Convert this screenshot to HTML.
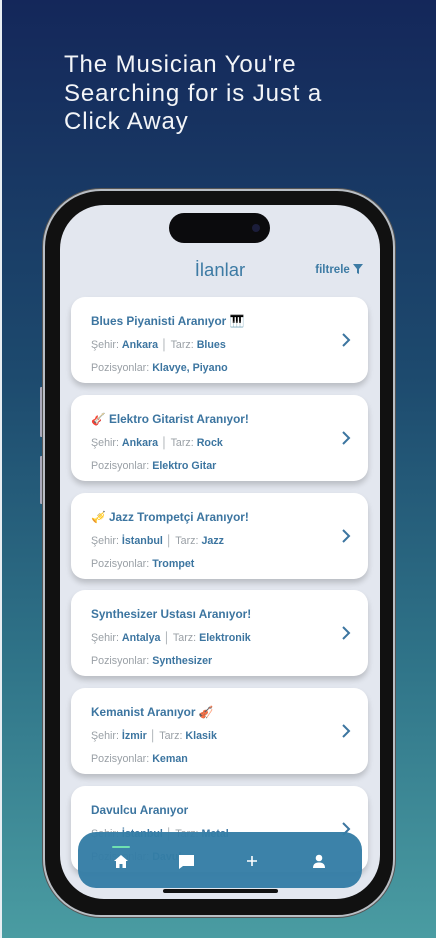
<!DOCTYPE html>
<html><head><meta charset="utf-8"><style>
*{margin:0;padding:0;box-sizing:border-box}
body{width:436px;height:938px;overflow:hidden;font-family:"Liberation Sans","DejaVu Sans",sans-serif;background:linear-gradient(180deg,#14275a 0%,#1d4a6e 40%,#2f7388 70%,#4a9ca2 100%);position:relative}
.edge{position:absolute;left:0;top:0;width:2px;height:938px;background:#e8eef3}
h1{position:absolute;left:64px;top:51px;color:#f3f5f8;font-weight:400;font-size:24px;line-height:28.5px;letter-spacing:0.9px}
.phone{position:absolute;left:43px;top:189px;width:352px;height:728px;border-radius:58px;background:#111;border:2px solid #b9bec4;box-shadow:0 0 0 1px #555}
.btn{position:absolute;left:40px;width:3px;background:#aab;border-radius:1px}
.screen{position:absolute;left:60px;top:205px;width:320px;height:694px;border-radius:44px;background:#e3e7ef;overflow:hidden}
.island{position:absolute;left:109px;top:8px;width:101px;height:30px;border-radius:16px;background:#0b0b0d}
.cam{position:absolute;left:83px;top:11px;width:8px;height:8px;border-radius:50%;background:#1b1d3a}
.title{position:absolute;left:0;width:100%;top:54px;text-align:center;color:#3d7ba4;font-size:18.5px}
.filt{position:absolute;right:17px;top:59px;color:#3d7ba4;font-size:11.5px;font-weight:bold}
.card{position:absolute;left:11px;width:297px;height:86px;background:#fff;border-radius:14px;box-shadow:0 4px 6px rgba(0,0,0,.18)}
.card .t{position:absolute;left:20px;top:17px;font-size:11.8px;font-weight:bold;color:#3c75a0}
.card .l{position:absolute;left:20px;font-size:10.7px;color:#9aa0a6}
.card .l b{color:#3c75a0}
.card .l1{top:42px}.card .l2{top:65px}
.chev{position:absolute;right:17px;top:35px}
.nav{position:absolute;left:18px;top:627px;width:284px;height:56px;border-radius:18px;background:rgba(52,125,165,.96)}
.bar{position:absolute;left:103px;top:684px;width:115px;height:4px;border-radius:2px;background:#111}
</style></head><body>
<div class="edge"></div>
<h1>The Musician You're<br>Searching for is Just a<br>Click Away</h1>
<div class="btn" style="top:387px;height:50px"></div>
<div class="btn" style="top:456px;height:48px"></div>
<div class="phone"></div>
<div class="screen">
<div class="island"><div class="cam"></div></div>
<div class="title">İlanlar</div>
<div class="filt">filtrele <svg width="10" height="10" viewBox="0 0 10 10" style="vertical-align:-1px"><path d="M0 0H10L6 5V10L4 9V5Z" fill="#3d7ba4"/></svg></div>

<div class="card" style="top:92px"><div class="t">Blues Piyanisti Aranıyor 🎹</div><div class="l l1">Şehir: <b>Ankara</b> │ Tarz: <b>Blues</b></div><div class="l l2">Pozisyonlar: <b>Klavye, Piyano</b></div><svg class="chev" width="10" height="16" viewBox="0 0 10 16"><path d="M2 2L8 8L2 14" stroke="#3c75a0" stroke-width="2" fill="none"/></svg></div>
<div class="card" style="top:190px"><div class="t">🎸 Elektro Gitarist Aranıyor!</div><div class="l l1">Şehir: <b>Ankara</b> │ Tarz: <b>Rock</b></div><div class="l l2">Pozisyonlar: <b>Elektro Gitar</b></div><svg class="chev" width="10" height="16" viewBox="0 0 10 16"><path d="M2 2L8 8L2 14" stroke="#3c75a0" stroke-width="2" fill="none"/></svg></div>
<div class="card" style="top:288px"><div class="t">🎺 Jazz Trompetçi Aranıyor!</div><div class="l l1">Şehir: <b>İstanbul</b> │ Tarz: <b>Jazz</b></div><div class="l l2">Pozisyonlar: <b>Trompet</b></div><svg class="chev" width="10" height="16" viewBox="0 0 10 16"><path d="M2 2L8 8L2 14" stroke="#3c75a0" stroke-width="2" fill="none"/></svg></div>
<div class="card" style="top:385px"><div class="t">Synthesizer Ustası Aranıyor!</div><div class="l l1">Şehir: <b>Antalya</b> │ Tarz: <b>Elektronik</b></div><div class="l l2">Pozisyonlar: <b>Synthesizer</b></div><svg class="chev" width="10" height="16" viewBox="0 0 10 16"><path d="M2 2L8 8L2 14" stroke="#3c75a0" stroke-width="2" fill="none"/></svg></div>
<div class="card" style="top:483px"><div class="t">Kemanist Aranıyor 🎻</div><div class="l l1">Şehir: <b>İzmir</b> │ Tarz: <b>Klasik</b></div><div class="l l2">Pozisyonlar: <b>Keman</b></div><svg class="chev" width="10" height="16" viewBox="0 0 10 16"><path d="M2 2L8 8L2 14" stroke="#3c75a0" stroke-width="2" fill="none"/></svg></div>
<div class="card" style="top:581px"><div class="t">Davulcu Aranıyor</div><div class="l l1">Şehir: <b>İstanbul</b> │ Tarz: <b>Metal</b></div><div class="l l2">Pozisyonlar: <b>Davul</b></div><svg class="chev" width="10" height="16" viewBox="0 0 10 16"><path d="M2 2L8 8L2 14" stroke="#3c75a0" stroke-width="2" fill="none"/></svg></div>

<div class="nav">
<div style="position:absolute;left:34px;top:14px;width:18px;height:2px;background:#6fe0b0;border-radius:1px"></div>
<svg style="position:absolute;left:36px;top:23px" width="14" height="13" viewBox="0 0 14 13"><path d="M7 0L14 6H12V13H8.5V9H5.5V13H2V6H0Z" fill="#fff"/></svg>
<svg style="position:absolute;left:100px;top:22px" width="17" height="16" viewBox="0 0 17 16"><path d="M1 1H16V12H5L1 15Z" fill="#fff"/></svg>
<svg style="position:absolute;left:168px;top:23px" width="12" height="12" viewBox="0 0 12 12"><path d="M6 1V11M1 6H11" stroke="#fff" stroke-width="1.6"/></svg>
<svg style="position:absolute;left:234px;top:22px" width="14" height="14" viewBox="0 0 14 14"><circle cx="7" cy="4" r="3.3" fill="#fff"/><path d="M1 14C1 9.5 4 8.5 7 8.5S13 9.5 13 14Z" fill="#fff"/></svg>
</div>
<div class="bar"></div>
</div>
</body></html>
